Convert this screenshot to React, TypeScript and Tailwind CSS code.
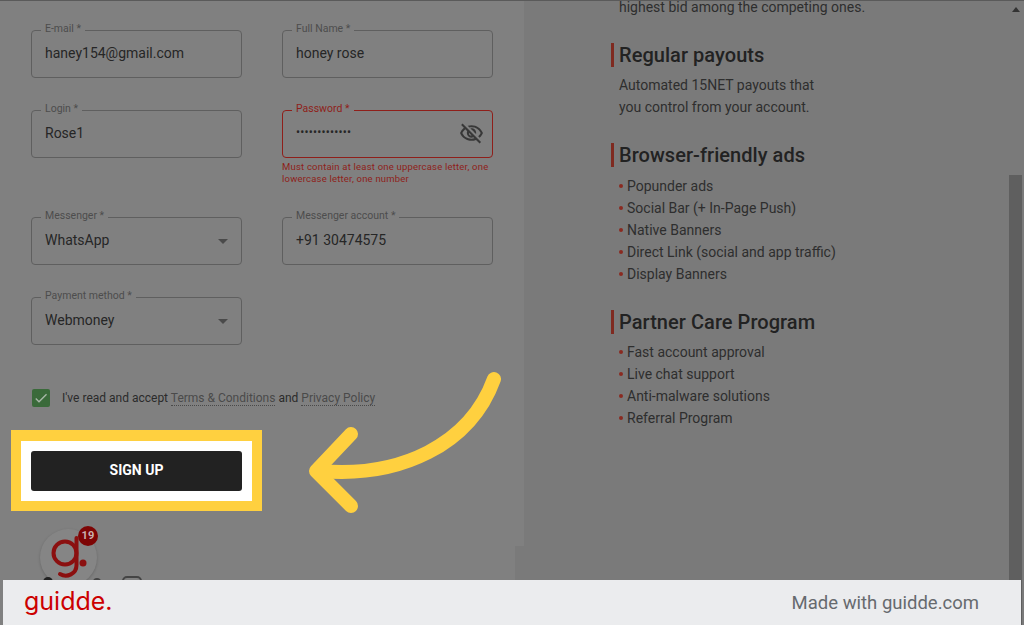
import React from "react";
import { MdOutlineVisibilityOff, MdArrowDropDown, MdCheck } from "react-icons/md";

function Field({ label, value, error, children, helper }: { label: string; value: string; error?: boolean; children?: React.ReactNode; helper?: string }) {
  return (
    <div className="w-[211px]">
      <div className={`relative flex h-[48px] items-center rounded border px-[13px] ${error ? "border-[#8f1f1a]" : "border-[#5f5f5f]"}`}>
        <span className={`absolute -top-[9px] left-[9px] bg-[#808080] px-[4px] text-[10.5px] leading-[14px] ${error ? "text-[#8f1f1a]" : "text-[#4d4d4d]"}`}>{label}</span>
        <span className="-mt-[2px] flex-1 text-[14px] text-[#262626]">{value}</span>
        {children}
      </div>
      {helper && <p className="mt-[3px] text-[9.5px] leading-[12px] tracking-[0.2px] text-[#8f1f1a]">{helper}</p>}
    </div>
  );
}

function Heading({ children }: { children: React.ReactNode }) {
  return <h2 className="h-[24px] border-l-[3px] border-[#7f2a20] pl-[5px] text-[20px] font-medium leading-[24px] tracking-[0.05px] text-[#222222]">{children}</h2>;
}

function List({ items, top }: { items: string[]; top: string }) {
  return (
    <ul className={`${top} mb-[25px] pl-[8px]`}>
      {items.map((t) => (
        <li key={t} className="flex h-[22px] items-center gap-[4px] text-[14px] text-[#2e2e2e]">
          <span className="h-[4px] w-[4px] rounded-full bg-[#8a2a20]" />
          {t}
        </li>
      ))}
    </ul>
  );
}

export default function App() {
  return (
    <div className="relative flex h-[625px] w-[1024px] overflow-hidden border-t border-[#5a5a5a] bg-[#7a7a7a] font-['Roboto',sans-serif]">
      <main className="h-full w-[524px] shrink-0 bg-[#808080] pl-[31px] pt-[29px]">
        <div className="grid w-[462px] grid-cols-2 gap-x-[40px] gap-y-[32px]">
          <Field label="E-mail *" value="haney154@gmail.com" />
          <Field label="Full Name *" value="honey rose" />
          <Field label="Login *" value="Rose1" />
          <div className="h-[75px]">
            <Field label="Password *" value="" error helper="Must contain at least one uppercase letter, one lowercase letter, one number">
              <span className="absolute left-[13px] top-[13px] text-[12px] leading-[16px] tracking-[0.2px] text-[#262626]">•••••••••••••</span>
              <MdOutlineVisibilityOff className="-mr-[5px] -mt-[2px] text-[25px] text-[#383838]" />
            </Field>
          </div>
          <Field label="Messenger *" value="WhatsApp">
            <MdArrowDropDown className="-mr-[7px] text-[24px] text-[#4a4a4a]" />
          </Field>
          <Field label="Messenger account *" value="+91 30474575" />
          <Field label="Payment method *" value="Webmoney">
            <MdArrowDropDown className="-mr-[7px] text-[24px] text-[#4a4a4a]" />
          </Field>
        </div>

        <div className="ml-[1px] mt-[43px] flex h-[20px] items-center gap-[12px] text-[12px] text-[#2b2b2b]">
          <span className="flex h-[18px] w-[18px] items-center justify-center rounded-[2px] bg-[#3a6a3a]">
            <MdCheck className="text-[16px] text-[#a9b8a9]" />
          </span>
          <span>
            I've read and accept <span className="border-b border-dotted border-[#4a4a4a] text-[#4a4a4a]">Terms &amp; Conditions</span> and{" "}
            <span className="border-b border-dotted border-[#4a4a4a] text-[#4a4a4a]">Privacy Policy</span>
          </span>
        </div>

        <div className="-ml-[20px] mt-[22px] h-[81px] w-[251px] border-[10px] border-t-[11px] border-[#ffd03f] bg-white p-[10px]">
          <button className="flex h-[40px] w-[211px] items-center justify-center rounded-[3px] bg-[#222222] pb-[2px] text-[14px] font-bold text-white">SIGN UP</button>
        </div>

        <div className="relative ml-[9px] mt-[18px] h-[57px] w-[57px] rounded-full bg-[#858585] shadow-[0_1px_3px_rgba(0,0,0,0.2)]">
          <svg className="absolute left-0 top-0" width="57" height="57" viewBox="0 0 57 57" fill="none" stroke="#8b1010" strokeWidth="4" strokeLinecap="round">
            <circle cx="25" cy="24" r="11.5" />
            <path d="M36.5 9 V36 C36.5 45 27 49 20 45" />
            <circle cx="43" cy="34" r="3.5" fill="#8b1010" stroke="none" />
          </svg>
          <span className="absolute -right-[1px] -top-[3px] flex h-[20px] w-[20px] items-center justify-center rounded-full bg-[#7d0505] text-[11px] font-bold tracking-[0.3px] text-[#c9b0b0]">19</span>
        </div>
      </main>

      <section className="w-[485px] shrink-0 pl-[87px]">
        <p className="-mt-[5px] mb-[25px] h-[22px] pl-[8px] text-[14px] leading-[22px] text-[#2e2e2e]">highest bid among the competing ones.</p>
        <Heading>Regular payouts</Heading>
        <p className="mb-[25px] mt-[7px] pl-[8px] text-[14px] leading-[22px] text-[#2e2e2e]">
          Automated 15NET payouts that
          <br />
          you control from your account.
        </p>
        <Heading>Browser-friendly ads</Heading>
        <List top="mt-[8px]" items={["Popunder ads", "Social Bar (+ In-Page Push)", "Native Banners", "Direct Link (social and app traffic)", "Display Banners"]} />
        <Heading>Partner Care Program</Heading>
        <List top="mt-[7px]" items={["Fast account approval", "Live chat support", "Anti-malware solutions", "Referral Program"]} />
      </section>

      <aside className="relative w-[15px] shrink-0">
        <span className="absolute left-[3px] top-[6px] h-0 w-0 border-x-[4px] border-b-[5px] border-x-transparent border-b-[#333]" />
        <div className="absolute bottom-0 left-0 right-[2px] top-[174px] bg-[#5f5f5f]" />
      </aside>

      <div className="absolute left-[515px] top-[545px] h-[34px] w-[9px] bg-[#7a7a7a]" />

      <div className="absolute left-[43px] top-[575px] flex items-start">
        <span className="mt-[1px] h-[10px] w-[10px] rounded-full bg-[#222]" />
        <span className="ml-[40px] mt-[2px] h-[8px] w-[8px] rounded-full bg-[#444]" />
        <span className="ml-[21px] h-[20px] w-[20px] rounded-[5px] border-2 border-[#444]" />
      </div>

      <footer className="absolute inset-x-[3px] bottom-0 flex h-[45px] items-center justify-between bg-[#ebecee] pl-[21px] pr-[42px]">
        <span className="-mt-[4px] font-['Inter',sans-serif] text-[25px] leading-[36px] text-[#cc0000]">guidde.</span>
        <span className="mt-[3px] text-[18.5px] text-[#666a6e]">Made with guidde.com</span>
      </footer>

      <svg className="pointer-events-none absolute left-0 -top-[1px]" width="1024" height="625" viewBox="0 0 1024 625" fill="none" stroke="#ffd03f" strokeWidth="14" strokeLinecap="round" strokeLinejoin="round">
        <path d="M494 379 C470 445 400 478 320 471" />
        <path d="M351 434 L316 471 L351 506" />
      </svg>
    </div>
  );
}
